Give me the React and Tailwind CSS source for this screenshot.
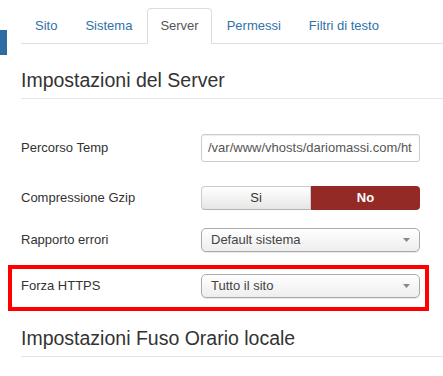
import React from "react";

function Arrow() {
  return (
    <svg width="7" height="4" viewBox="0 0 7 4" className="shrink-0">
      <polygon points="0,0 7,0 3.5,4" fill="#888" />
    </svg>
  );
}

function Select({ value }) {
  return (
    <div className="w-[219px] h-[24px] flex items-center justify-between pl-[9px] pr-[9px] border border-[#aaa] rounded-[5px] bg-linear-to-b from-white via-[#f6f6f6] to-[#eee] shadow-[0_1px_1px_rgba(0,0,0,0.1)] text-[13px] text-[#444]">
      <span>{value}</span>
      <Arrow />
    </div>
  );
}

export default function App() {
  const tabs = ["Sito", "Sistema", "Server", "Permessi", "Filtri di testo"];
  return (
    <div
      className="w-[443px] h-[376px] bg-white flex overflow-hidden"
      style={{ fontFamily: '"Liberation Sans", Arial, sans-serif' }}
    >
      <div className="w-[7px] shrink-0">
        <div className="mt-[30px] h-[25px] bg-[#2d6ca2]" />
      </div>
      <div className="flex-1 pl-[14px] pt-[8px] flex flex-col">
        <ul className="flex border-b border-[#ddd] pl-[1px]">
          {tabs.map((t) => {
            const active = t === "Server";
            return (
              <li key={t} className="-mb-px mr-[2px]">
                <span
                  className={
                    "block px-[12px] py-[8px] leading-[18px] text-[13px] border rounded-t-[4px] " +
                    (active
                      ? "border-[#ddd] border-b-white bg-white text-[#555]"
                      : "border-transparent text-[#3071a9]")
                  }
                >
                  {t}
                </span>
              </li>
            );
          })}
        </ul>

        <h3 className="mt-[18px] text-[19.5px] leading-[36px] border-b border-[#e5e5e5] text-[#333] font-normal">
          Impostazioni del Server
        </h3>

        <div className="mt-[35px] flex items-center h-[28px]">
          <div className="w-[180px] text-[13px] text-[#333]">Percorso Temp</div>
          <div className="w-[219px] h-[28px] flex items-center pl-[6px] pr-[5px] border border-[#ccc] rounded-[3px] overflow-hidden whitespace-nowrap text-[13px] text-[#555] shadow-[inset_0_1px_1px_rgba(0,0,0,0.075)]">
            /var/www/vhosts/dariomassi.com/ht
          </div>
        </div>

        <div className="mt-[24px] flex items-center h-[24px]">
          <div className="w-[180px] text-[13px] text-[#333]">Compressione Gzip</div>
          <div className="w-[219px] h-[24px] flex text-[13px]">
            <div className="w-[110px] flex items-center justify-center border border-[#ccc] border-b-[#b3b3b3] rounded-l-[4px] bg-linear-to-b from-white to-[#e6e6e6] text-[#333]">
              Si
            </div>
            <div className="flex-1 flex items-center justify-center rounded-r-[4px] bg-[#942a25] text-white font-bold">
              No
            </div>
          </div>
        </div>

        <div className="mt-[18px] flex items-center h-[24px]">
          <div className="w-[180px] text-[13px] text-[#333]">Rapporto errori</div>
          <Select value="Default sistema" />
        </div>

        <div className="mt-[13px] -ml-[13px] mr-[14px] border-4 border-[#ff0000] pt-[5px] pb-[9px] pl-[9px]">
          <div className="flex items-center h-[24px]">
            <div className="w-[180px] text-[13px] text-[#333]">Forza HTTPS</div>
            <Select value="Tutto il sito" />
          </div>
        </div>

        <h3 className="mt-[9px] text-[19.5px] leading-[36px] border-b border-[#e5e5e5] text-[#333] font-normal">
          Impostazioni Fuso Orario locale
        </h3>
      </div>
    </div>
  );
}
